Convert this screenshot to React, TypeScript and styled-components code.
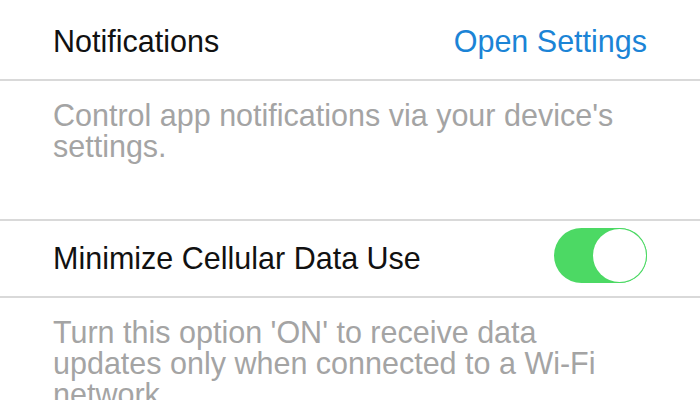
import React, { useState } from 'react';
import styled, { createGlobalStyle } from 'styled-components';

const GlobalStyle = createGlobalStyle`
    * {
        box-sizing: border-box;
    }
    body {
        margin: 0;
        background: #ffffff;
        font-family: 'Liberation Sans', Helvetica, Arial, sans-serif;
        -webkit-font-smoothing: antialiased;
    }
`;

const Page = styled.div`
    display: flex;
    flex-direction: column;
    width: 700px;
    height: 400px;
    overflow: hidden;
    background: #ffffff;
`;

const Row = styled.div<{ height: number; offset?: number }>`
    display: flex;
    align-items: center;
    justify-content: space-between;
    height: ${props => props.height}px;
    padding: ${props => props.offset || 0}px 53px 0 53px;
    border-bottom: 2px solid #d9d9d9;
    flex-shrink: 0;
`;

const Title = styled.div`
    font-size: 30.5px;
    line-height: 31px;
    color: #111111;
`;

const Link = styled.a`
    font-size: 30.5px;
    line-height: 31px;
    color: #1b84d6;
    text-decoration: none;
    cursor: pointer;
`;

const Footer = styled.div<{ height?: number }>`
    flex-shrink: 0;
    height: ${props => (props.height ? `${props.height}px` : 'auto')};
    padding: 19px 53px 0 53px;
    font-size: 30.5px;
    line-height: 31px;
    color: #a4a4a4;
    border-bottom: ${props => (props.height ? '2px solid #d9d9d9' : 'none')};
`;

const Track = styled.button<{ on: boolean }>`
    position: relative;
    width: 93px;
    height: 55px;
    margin-bottom: 6px;
    padding: 0;
    border: none;
    border-radius: 28px;
    background: ${props => (props.on ? '#4cd964' : '#e5e5ea')};
    cursor: pointer;
    flex-shrink: 0;
`;

const Knob = styled.span<{ on: boolean }>`
    position: absolute;
    top: 1px;
    left: ${props => (props.on ? '39px' : '1px')};
    width: 53px;
    height: 53px;
    border-radius: 50%;
    background: #ffffff;
    box-shadow: 0 0 0 1px ${props => (props.on ? '#4cd964' : '#d4d4d4')};
    transition: left 0.2s;
`;

const Toggle = () => {
    const [on, setOn] = useState(true);
    return (
        <Track on={on} onClick={() => setOn(!on)}>
            <Knob on={on} />
        </Track>
    );
};

const App = () => (
    <Page>
        <GlobalStyle />
        <Row height={81} offset={3}>
            <Title>Notifications</Title>
            <Link>Open Settings</Link>
        </Row>
        <Footer height={140}>Control app notifications via your device's settings.</Footer>
        <Row height={77}>
            <Title>Minimize Cellular Data Use</Title>
            <Toggle />
        </Row>
        <Footer>
            Turn this option 'ON' to receive data updates only when connected to a Wi-Fi network.
        </Footer>
    </Page>
);

export default App;
